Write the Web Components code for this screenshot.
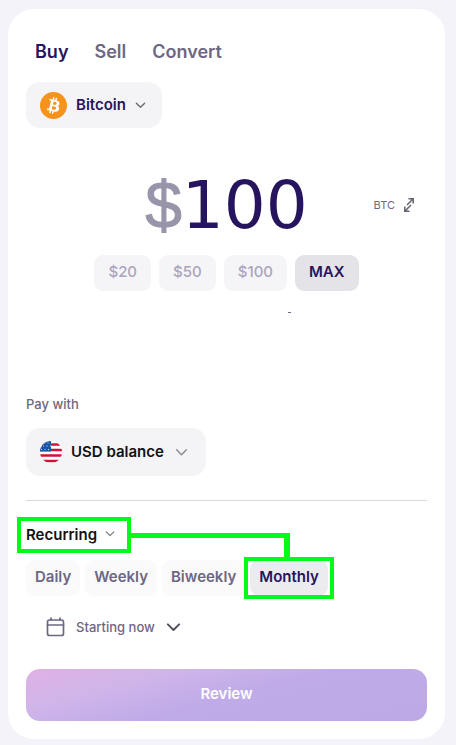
<!DOCTYPE html>
<html lang="en">
<head>
<meta charset="utf-8">
<meta name="viewport" content="width=device-width, initial-scale=1">
<title>Buy Bitcoin</title>
<style>
body {
  margin: 0;
  padding: 9px 11px 7px 8px;
  background: #f4f3f9;
  font-family: Inter, "Liberation Sans", sans-serif;
  color: #6d6782;
}
</style>
</head>
<body>
<trade-card></trade-card>

<template id="trade-card">
  <style>
  :host {
    display: block;
    background: #fff;
    border-radius: 26px;
    padding: 30px 18px 18px;
  }
  .amount {
    display: grid;
    grid-template-columns: 1fr auto 1fr;
    align-items: center;
    margin-top: 37px;
  }
  .amount unit-switch {
    justify-self: end;
    margin-right: 12px;
  }
  .presets {
    display: flex;
    justify-content: center;
    gap: 8px;
    margin-top: 10px;
  }
  .note {
    width: 3px;
    height: 1px;
    margin: 21px auto 0;
    translate: 63px;
    background: #6d6782;
  }
  .label {
    margin: 83px 0 16px;
    font-size: 13px;
    font-weight: 500;
    line-height: 16px;
  }
  hr {
    height: 1px;
    margin: 24px 0 16px;
    border: 0;
    background: #d9d8de;
  }
  asset-picker {
    margin-top: 18px;
  }
  .label + asset-picker {
    margin-top: 0;
  }
  .start {
    margin: 20px 0 31px 20px;
  }
  </style>
  <trade-tabs></trade-tabs>
  <asset-picker name="Asset" options="Bitcoin" style="--ink: #27145e">
    <svg slot="icon" width="27" height="27" viewBox="0 0 32 32">
      <circle cx="16" cy="16" r="16" fill="#f7931a"/>
      <path fill="#fff" d="M23.2 14c.3-2.1-1.3-3.2-3.5-4l.7-2.9-1.7-.4-.7 2.8-1.4-.3.7-2.8-1.7-.4-.8 2.9-3.5-.9-.4 1.8 1.3.3c.7.2.8.6.8 1l-2 8c-.1.2-.3.5-.8.4l-1.3-.3-.8 2 3.4.8-.7 2.9 1.7.4.7-2.8 1.4.3-.7 2.8 1.7.4.7-2.9c3 .6 5.2.4 6.1-2.3.8-2.1 0-3.4-1.5-4.2 1.1-.2 2-1 2.3-2.6zm-4 5.6c-.6 2.2-4.2 1-5.4.7l1-3.8c1.1.3 5 .9 4.4 3.1zm.5-5.6c-.5 1.9-3.5.9-4.4.7l.8-3.5c1 .3 4.2.7 3.6 2.8z"/>
    </svg>
  </asset-picker>
  <div class="amount">
    <span></span>
    <amount-field></amount-field>
    <unit-switch></unit-switch>
  </div>
  <div class="presets">
    <preset-chip>$20</preset-chip>
    <preset-chip>$50</preset-chip>
    <preset-chip>$100</preset-chip>
    <preset-chip active>MAX</preset-chip>
  </div>
  <div class="note"></div>
  <div class="label">Pay with</div>
  <asset-picker large name="Pay with" options="USD balance">
    <svg slot="icon" width="22" height="22" viewBox="0 0 22 22">
      <defs><clipPath id="disc"><circle cx="11" cy="11" r="11"/></clipPath></defs>
      <g clip-path="url(#disc)">
        <rect width="22" height="22" fill="#fff"/>
        <path stroke="#d3103c" stroke-width="2.6" d="M0 3.5h22M0 9h22M0 14.5h22M0 20h22"/>
        <rect width="11" height="10.5" fill="#1756a8"/>
        <path stroke="#c5d9ee" stroke-dasharray="1 2.5" d="M1 8.5h10M3 5h8M4 2h8"/>
      </g>
    </svg>
  </asset-picker>
  <hr>
  <schedule-section></schedule-section>
  <start-date class="start"></start-date>
  <review-button>Review</review-button>
</template>

<script>
const chevron = (size, width, color) => `
  <svg class="chevron" width="${size}" height="${size}" viewBox="0 0 12 12" fill="none"
    stroke="${color}" stroke-width="${width}" stroke-linecap="round" stroke-linejoin="round">
    <path d="M1.5 3.5 6 8l4.5-4.5"/>
  </svg>`;

const selectStyle = `
  select {
    appearance: none;
    field-sizing: content;
    margin: 0;
    padding: 0;
    border: 0;
    background: none;
    color: inherit;
    font: inherit;
    cursor: pointer;
  }
  .chevron {
    flex: none;
    pointer-events: none;
  }`;

class TradeTabs extends HTMLElement {
  constructor() {
    super();
    this.attachShadow({ mode: "open" }).innerHTML = `
      <style>
      :host {
        display: flex;
        gap: 26px;
        padding-left: 9px;
      }
      button {
        padding: 0;
        border: 0;
        background: none;
        color: #6d6782;
        font: 600 18px/25px Inter, sans-serif;
        cursor: pointer;
      }
      button[aria-pressed="true"] {
        color: #27145e;
      }
      </style>
      <button aria-pressed="true">Buy</button>
      <button aria-pressed="false">Sell</button>
      <button aria-pressed="false">Convert</button>`;

    const buttons = this.shadowRoot.querySelectorAll("button");
    buttons.forEach(button => {
      button.addEventListener("click", () => {
        buttons.forEach(b => b.setAttribute("aria-pressed", b === button));
      });
    });
  }
}

class AssetPicker extends HTMLElement {
  connectedCallback() {
    const large = this.hasAttribute("large");
    const name = this.getAttribute("name");
    const options = this.getAttribute("options").split(",");
    this.attachShadow({ mode: "open" }).innerHTML = `
      <style>
      :host {
        display: flex;
        width: fit-content;
        box-sizing: border-box;
        height: 46px;
        padding: 0 16px 0 14px;
        border-radius: 14px;
        background: #f4f4f6;
        color: var(--ink, #121116);
      }
      :host([large]) {
        height: 48px;
        padding-right: 18px;
      }
      label {
        display: flex;
        align-items: center;
        gap: 9px;
        font-size: 15px;
        font-weight: 600;
        line-height: 20px;
      }
      :host([large]) .chevron {
        margin-left: 2px;
      }
      ${selectStyle}
      </style>
      <label>
        <slot name="icon"></slot>
        <select aria-label="${name}">${options.map(o => `<option>${o}</option>`).join("")}</select>
        ${large ? chevron(13, 1.4, "#8d8b94") : chevron(11, 1.5, "#6c6a73")}
      </label>`;
  }
}

class AmountField extends HTMLElement {
  constructor() {
    super();
    this.attachShadow({ mode: "open" }).innerHTML = `
      <style>
      :host {
        display: block;
        font-family: "DejaVu Sans", sans-serif;
        font-size: 66px;
        line-height: 80px;
        color: #27145e;
      }
      label {
        display: flex;
      }
      span {
        color: #9894aa;
        font-family: "Liberation Sans", sans-serif;
        -webkit-text-stroke: 1px;
      }
      input {
        field-sizing: content;
        height: 80px;
        padding: 2px 0 0;
        box-sizing: border-box;
        border: 0;
        outline: 0;
        background: none;
        color: inherit;
        font: inherit;
      }
      </style>
      <label><span>$</span><input type="text" inputmode="decimal" aria-label="Amount" value="100"></label>`;
  }
}

class UnitSwitch extends HTMLElement {
  constructor() {
    super();
    this.attachShadow({ mode: "open" }).innerHTML = `
      <style>
      :host {
        display: block;
      }
      button {
        display: flex;
        align-items: center;
        gap: 8px;
        padding: 0;
        border: 0;
        background: none;
        color: #6d6782;
        font: 400 11px/16px Inter, sans-serif;
        cursor: pointer;
      }
      </style>
      <button>BTC
        <svg width="12" height="16" viewBox="0 0 12 16" fill="none" stroke="#65636b" stroke-width="1.5">
          <path d="M5.5 1.8h4.700v4.700M10.200 1.800 4 8M1.800 9.500v4.700h4.700M1.800 14.200 8 8"/>
        </svg>
      </button>`;
  }
}

class PresetChip extends HTMLElement {
  constructor() {
    super();
    this.attachShadow({ mode: "open" }).innerHTML = `
      <style>
      :host {
        display: block;
      }
      button {
        height: 36px;
        padding: 0 14px 2px;
        border: 0;
        border-radius: 9px;
        background: #f5f5f8;
        color: #aaa4bf;
        font: 500 15px/20px Inter, sans-serif;
        cursor: pointer;
      }
      :host([active]) button {
        background: #e4e4e8;
        color: #27145e;
        font-weight: 600;
      }
      </style>
      <button><slot></slot></button>`;
  }
}

class ScheduleSection extends HTMLElement {
  constructor() {
    super();
    const choices = ["Daily", "Weekly", "Biweekly", "Monthly"];
    this.attachShadow({ mode: "open" }).innerHTML = `
      <style>
      :host {
        display: block;
        --mark: #00fb18;
      }
      .kind {
        position: relative;
        display: flex;
        align-items: center;
        gap: 8px;
        width: fit-content;
        height: 36px;
        padding: 0 16px 2px 0;
        box-sizing: border-box;
        color: #121116;
        font-size: 15px;
        font-weight: 600;
      }
      .choices {
        display: flex;
        gap: 5px;
        margin-top: 7px;
      }
      .choice {
        position: relative;
        padding: 7px 9px 9px;
        border-radius: 9px;
        background: #fafafb;
        font-size: 15px;
        font-weight: 600;
        line-height: 20px;
        cursor: pointer;
      }
      .choice:has(:checked) {
        background: #ececef;
        color: #27145e;
      }
      input {
        position: absolute;
        inset: 0;
        margin: 0;
        opacity: 0;
      }
      .kind::after, .choice:last-child::after {
        content: "";
        position: absolute;
        inset: 0 0 0 -9px;
        border: 4px solid var(--mark);
        pointer-events: none;
      }
      .choice:last-child::after {
        inset: -3px -6px;
      }
      .wire {
        position: absolute;
        left: 100%;
        top: 16px;
        width: 159px;
        height: 24px;
        box-sizing: border-box;
        border-top: 5px solid var(--mark);
        border-right: 6px solid var(--mark);
        pointer-events: none;
      }
      ${selectStyle}
      </style>
      <div class="kind">
        <select aria-label="Order type"><option>Recurring</option></select>
        ${chevron(10, 1.4, "#77757e")}
        <i class="wire"></i>
      </div>
      <div class="choices" role="radiogroup" aria-label="Frequency">
        ${choices.map(c => `<label class="choice"><input type="radio" name="every" value="${c}"${c === "Monthly" ? " checked" : ""}>${c}</label>`).join("")}
      </div>`;
  }
}

class StartDate extends HTMLElement {
  constructor() {
    super();
    this.attachShadow({ mode: "open" }).innerHTML = `
      <style>
      :host {
        display: block;
      }
      label {
        display: flex;
        align-items: center;
        gap: 11px;
        height: 22px;
        font-size: 13px;
        font-weight: 500;
        line-height: 20px;
      }
      ${selectStyle}
      </style>
      <label>
        <svg width="19" height="20" viewBox="0 0 19 20" fill="none" stroke="#6d6782" stroke-width="1.7" stroke-linecap="round">
          <rect x="1.5" y="3" width="16" height="15.5" rx="2"/>
          <path d="M1.5 8h16M5 1v2M14 1v2"/>
        </svg>
        <select aria-label="Start date"><option>Starting now</option></select>
        ${chevron(15, 1.6, "#55515f")}
      </label>`;
  }
}

class ReviewButton extends HTMLElement {
  constructor() {
    super();
    this.attachShadow({ mode: "open" }).innerHTML = `
      <style>
      :host {
        display: block;
      }
      button {
        width: 100%;
        height: 52px;
        padding: 0 0 2px;
        border: 0;
        border-radius: 14px;
        background: linear-gradient(165deg, #e0b0e6 0%, #d0b5e9 25%, #bfabe8 52%, #bda9e6 100%);
        color: #fff;
        font: 600 15px/20px Inter, sans-serif;
        cursor: pointer;
      }
      </style>
      <button><slot></slot></button>`;
  }
}

class TradeCard extends HTMLElement {
  constructor() {
    super();
    const template = document.getElementById("trade-card");
    this.attachShadow({ mode: "open" }).append(template.content.cloneNode(true));
  }
}

customElements.define("trade-tabs", TradeTabs);
customElements.define("asset-picker", AssetPicker);
customElements.define("amount-field", AmountField);
customElements.define("unit-switch", UnitSwitch);
customElements.define("preset-chip", PresetChip);
customElements.define("schedule-section", ScheduleSection);
customElements.define("start-date", StartDate);
customElements.define("review-button", ReviewButton);
customElements.define("trade-card", TradeCard);
</script>
</body>
</html>
